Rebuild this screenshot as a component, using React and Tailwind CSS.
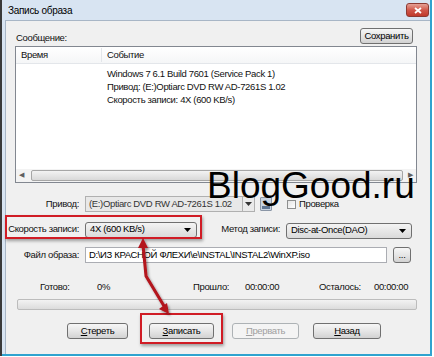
import React from "react";

const font = { fontFamily: '"Liberation Sans", Arial, sans-serif' };
const txt = "text-[9.5px] tracking-[-0.35px] whitespace-nowrap";

const Btn = ({ children, className = "", disabled = false }) => (
  <div
    className={`flex items-center justify-center rounded-[3px] border ${txt} ${
      disabled
        ? "border-[#adb2b5] bg-[#f4f4f4] text-[#a0a0a0]"
        : "border-[#707070] bg-gradient-to-b from-[#f6f6f6] via-[#e6e6e6] to-[#d2d2d2] text-black"
    } ${className}`}
  >
    {children}
  </div>
);

const Combo = ({ text, className = "" }) => (
  <div
    className={`flex items-center justify-between rounded-[3px] border border-[#707070] bg-gradient-to-b from-[#f4f4f4] to-[#dadada] pl-[4px] pr-[5px] ${txt} ${className}`}
  >
    <span>{text}</span>
    <svg width="7" height="4" viewBox="0 0 7 4">
      <path d="M0 0h7L3.5 4z" fill="#000" />
    </svg>
  </div>
);

const Label = ({ children, className = "" }) => (
  <div className={`flex shrink-0 items-center justify-end text-[#111] ${txt} ${className}`}>
    {children}
  </div>
);

export default function App() {
  return (
    <div className="relative h-[357px] w-[434px] overflow-hidden bg-white text-black" style={font}>
      <div className="flex h-[356px] w-[432px] border-l-2 border-l-[#3a3a3a]">
        <div className="flex h-full w-[430px] flex-col border-r-2 border-b-2 border-[#2fa3cf] bg-[#d8e4f2]">
          {/* title bar */}
          <div className="flex h-[20px] shrink-0 items-center justify-between pl-[6px] pr-[1px]">
            <span className="whitespace-nowrap text-[10px] tracking-[-0.3px] text-black">Запись образа</span>
            <div className="flex h-[14px] w-[23px] items-center justify-center rounded-[3px] border border-[#8d3a33] bg-gradient-to-b from-[#e5a096] via-[#d0574b] to-[#c0392b]">
              <svg width="8" height="7" viewBox="0 0 8 7">
                <path d="M1 1l6 5M7 1L1 6" stroke="#fff" strokeWidth="1.8" />
              </svg>
            </div>
          </div>

          {/* client */}
          <div className="ml-[3px] flex flex-1 flex-col border-l border-t border-[#a8b6c6] bg-[#f0f0f0]">
            <div className="mt-[7px] flex h-[16px] items-end justify-between pl-[10px] pr-[17px]">
              <span className={`leading-[12px] text-[#111] ${txt}`}>Сообщение:</span>
              <Btn className="h-[16px] w-[53px]">Сохранить</Btn>
            </div>

            {/* log list */}
            <div className="ml-[9px] mt-[2px] flex h-[137px] w-[402px] flex-col border border-[#828790] bg-white">
              <div className={`flex h-[17px] shrink-0 items-center border-b border-[#e3e6ea] bg-gradient-to-b from-white to-[#f5f6f7] text-[#111] ${txt}`}>
                <div className="w-[86px] border-r border-[#e3e6ea] pl-[5px]">Время</div>
                <div className="pl-[5px]">Событие</div>
              </div>
              <div className={`flex flex-1 flex-col pl-[91px] pt-[3px] leading-[13px] text-[#111] ${txt}`}>
                <div>Windows 7 6.1 Build 7601 (Service Pack 1)</div>
                <div>Привод: (E:)Optiarc DVD RW AD-7261S 1.02</div>
                <div>Скорость записи: 4X (600 KB/s)</div>
              </div>
              <div className="flex h-[13px] shrink-0 items-center bg-[#f3f3f3] px-[3px]">
                <span className="w-[10px] text-[7px] text-[#606060]">◀</span>
                <div className="mx-[2px] h-[11px] flex-1 rounded-[2px] border border-[#a6a6a6] bg-gradient-to-b from-[#f3f3f3] to-[#d9d9d9]" />
                <span className="w-[8px] text-right text-[7px] text-[#606060]">▶</span>
              </div>
            </div>

            {/* drive row */}
            <div className="mt-[13px] flex h-[16px] items-center">
              <Label className="w-[73px]">Привод:</Label>
              <div className={`ml-[6px] flex h-[16px] w-[170px] items-center border border-[#b0b0b0] bg-[#e8e8e8] text-[#333] ${txt}`}>
                <span className="flex-1 overflow-hidden pl-[3px]">(E:)Optiarc DVD RW AD-7261S 1.02</span>
                <div className="flex h-[14px] w-[12px] shrink-0 items-center justify-center border-l border-[#b0b0b0] bg-[#eaeaea]">
                  <svg width="7" height="4" viewBox="0 0 7 4">
                    <path d="M0 0h7L3.5 4z" fill="#333" />
                  </svg>
                </div>
              </div>
              <div className="ml-[5px] flex h-[14px] w-[12px] flex-col justify-end rounded-[1px] border border-[#8a96a6] bg-[#c7d3e2]">
                <div className="mx-[1px] mb-[1px] h-[3px] bg-[#5d7594]" />
              </div>
              <div className="ml-[15px] h-[9px] w-[9px] border border-[#8e8f8f] bg-gradient-to-br from-[#e4e4e4] to-white" />
              <span className={`ml-[3px] text-[#111] ${txt}`}>Проверка</span>
            </div>

            {/* speed row */}
            <div className="mt-[9px] flex h-[17px] items-center">
              <Label className="w-[73px]">Скорость записи:</Label>
              <Combo text="4X (600 KB/s)" className="ml-[6px] h-[16px] w-[112px]" />
              <Label className="w-[83px]">Метод записи:</Label>
              <Combo text="Disc-at-Once(DAO)" className="ml-[6px] mt-[2px] h-[16px] w-[126px]" />
            </div>

            {/* file row */}
            <div className="mt-[9px] flex h-[16px] items-center">
              <Label className="w-[73px]">Файл образа:</Label>
              <div className={`ml-[6px] flex h-[16px] w-[302px] items-center border border-[#abadb3] bg-white pl-[3px] ${txt}`}>
                D:\ИЗ КРАСНОЙ ФЛЕХИ\e\INSTAL\INSTAL2\WinXP.iso
              </div>
              <Btn className="ml-[6px] h-[16px] w-[18px]">...</Btn>
            </div>

            {/* status row */}
            <div className={`mt-[18px] flex h-[12px] items-center text-[#111] ${txt}`}>
              <span className="ml-[34px] w-[57px]">Готово:</span>
              <span className="w-[96px]">0%</span>
              <span className="w-[52px]">Прошло:</span>
              <span className="w-[74px]">00:00:00</span>
              <span className="w-[55px]">Осталось:</span>
              <span>00:00:00</span>
            </div>

            {/* progress */}
            <div className="ml-[11px] mt-[6px] h-[11px] w-[400px] rounded-[2px] border border-[#bcbcbc] bg-gradient-to-b from-[#f3f3f3] to-[#dcdcdc]" />

            {/* buttons */}
            <div className="mt-[13px] flex h-[16px] items-center">
              <Btn className="ml-[61px] h-[16px] w-[61px]">
                <span className="underline">С</span>тереть
              </Btn>
              <Btn className="ml-[21px] h-[16px] w-[65px]">
                <span className="underline">З</span>аписать
              </Btn>
              <Btn disabled className="ml-[18px] h-[16px] w-[67px]">
                <span className="underline">П</span>рервать
              </Btn>
              <Btn className="ml-[14px] h-[16px] w-[68px]">
                <span className="underline">Н</span>азад
              </Btn>
            </div>
          </div>
        </div>
      </div>

      {/* watermark */}
      <div className="pointer-events-none absolute left-[207px] top-[167px] text-[37px] leading-none text-black">
        BlogGood.ru
      </div>

      {/* highlight boxes */}
      <div className="pointer-events-none absolute left-[5px] top-[215px] h-[24px] w-[197px] border-2 border-[#d01c25] shadow-[1px_2px_3px_rgba(0,0,0,0.35)]" />
      <div className="pointer-events-none absolute left-[140px] top-[313px] h-[31px] w-[83px] border-2 border-[#d01c25] shadow-[1px_2px_3px_rgba(0,0,0,0.35)]" />

      {/* arrow */}
      <svg className="pointer-events-none absolute left-0 top-0" width="434" height="357" viewBox="0 0 434 357">
        <defs>
          <filter id="sh" x="-20%" y="-20%" width="140%" height="140%">
            <feDropShadow dx="1.5" dy="2" stdDeviation="1.2" floodColor="#000" floodOpacity="0.4" />
          </filter>
        </defs>
        <g filter="url(#sh)" fill="#b3121b" stroke="#b3121b">
          <polyline points="143,245 146,276 164,306" fill="none" strokeWidth="3" />
          <path d="M143 238l-5 10h10z" stroke="none" />
          <path d="M169 314l-10-5 8-6z" stroke="none" />
        </g>
      </svg>
    </div>
  );
}
